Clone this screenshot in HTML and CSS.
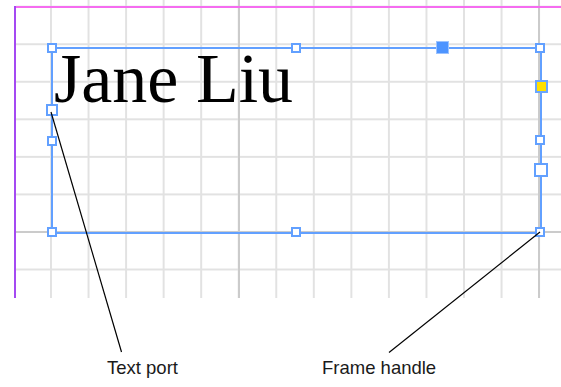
FILE: index.html
```html
<!DOCTYPE html>
<html lang="en">
<head>
    <meta charset="UTF-8">
    <title>Text frame</title>
    <link rel="stylesheet" href="styles.css">
</head>
<body>
    <div class="canvas">
        <div class="grid"></div>
        <div class="major major-v" style="left: 537.5px"></div>
        <div class="major major-v" style="left: 237.5px"></div>
        <div class="major major-h" style="top: 231px"></div>
        <div class="margin-top"></div>
        <div class="margin-left"></div>

        <div class="frame"></div>
        <div class="frame-text">Jane Liu</div>

        <div class="handle" style="left: 52px; top: 48px"></div>
        <div class="handle" style="left: 296px; top: 48px"></div>
        <div class="handle" style="left: 540px; top: 48px"></div>
        <div class="handle" style="left: 52px; top: 141px"></div>
        <div class="handle" style="left: 540px; top: 140px"></div>
        <div class="handle" style="left: 52px; top: 232px"></div>
        <div class="handle" style="left: 296px; top: 232px"></div>
        <div class="handle" style="left: 540px; top: 232px"></div>
        <div class="handle port" style="left: 51.5px; top: 110px"></div>
        <div class="handle big" style="left: 540.5px; top: 170px"></div>
        <div class="handle overflow" style="left: 541px; top: 86.5px"></div>
        <div class="handle solid" style="left: 442.5px; top: 47.5px"></div>

        <svg class="leaders" width="561" height="387" viewBox="0 0 561 387">
            <line x1="51" y1="112" x2="121.5" y2="352"/>
            <line x1="540" y1="232" x2="389" y2="352.5"/>
        </svg>

        <div class="label" style="left: 107px">Text port</div>
        <div class="label" style="left: 322px">Frame handle</div>
    </div>
</body>
</html>
```

FILE: styles.css
```css
body {
    margin: 0;
    background: #fff;
    font-family: "Liberation Sans", Arial, sans-serif;
}
.canvas {
    position: relative;
    width: 561px;
    height: 387px;
    overflow: hidden;
}
.grid {
    position: absolute;
    left: 16px;
    top: 0;
    width: 545px;
    height: 298px;
    background-image:
        linear-gradient(to right, #e2e2e2 2px, transparent 2px),
        linear-gradient(to bottom, #e2e2e2 2px, transparent 2px);
    background-size: 37.56px 37.56px;
    background-position: 34px 5.7px;
}
.major {
    position: absolute;
    background: #cbcbcb;
}
.major-v {
    top: 0;
    width: 2px;
    height: 298px;
}
.major-h {
    left: 16px;
    width: 545px;
    height: 2px;
}
.margin-top {
    position: absolute;
    left: 15px;
    top: 6px;
    width: 546px;
    height: 2px;
    background: #f56cf0;
}
.margin-left {
    position: absolute;
    left: 14px;
    top: 6px;
    width: 2px;
    height: 292px;
    background: #a449f2;
}
.frame {
    position: absolute;
    left: 51px;
    top: 47px;
    width: 487px;
    height: 183px;
    border: 2px solid #62a0ff;
}
.frame-text {
    position: absolute;
    left: 54px;
    top: 43.5px;
    font-family: "Liberation Serif", "Times New Roman", serif;
    font-size: 70px;
    line-height: 70px;
    color: #000;
    white-space: nowrap;
}
.handle {
    position: absolute;
    width: 6px;
    height: 6px;
    margin: -5px 0 0 -5px;
    background: #fff;
    border: 2px solid #62a0ff;
}
.handle.port {
    width: 8px;
    height: 8px;
    margin: -6px 0 0 -6px;
}
.handle.big {
    width: 10px;
    height: 10px;
    margin: -7px 0 0 -7px;
}
.handle.overflow {
    width: 9px;
    height: 9px;
    margin: -6.5px 0 0 -6.5px;
    background: #ffe000;
    border-color: #6aa6ff;
}
.handle.solid {
    width: 11px;
    height: 11px;
    margin: -6.5px 0 0 -6.5px;
    background: #4d94ff;
    border: 1px solid #9cc3ff;
}
.leaders {
    position: absolute;
    left: 0;
    top: 0;
}
.leaders line {
    stroke: #000;
    stroke-width: 1.2;
}
.label {
    position: absolute;
    top: 356px;
    font-size: 18.5px;
    line-height: 24px;
    color: #1a1a1a;
    white-space: nowrap;
}
```
